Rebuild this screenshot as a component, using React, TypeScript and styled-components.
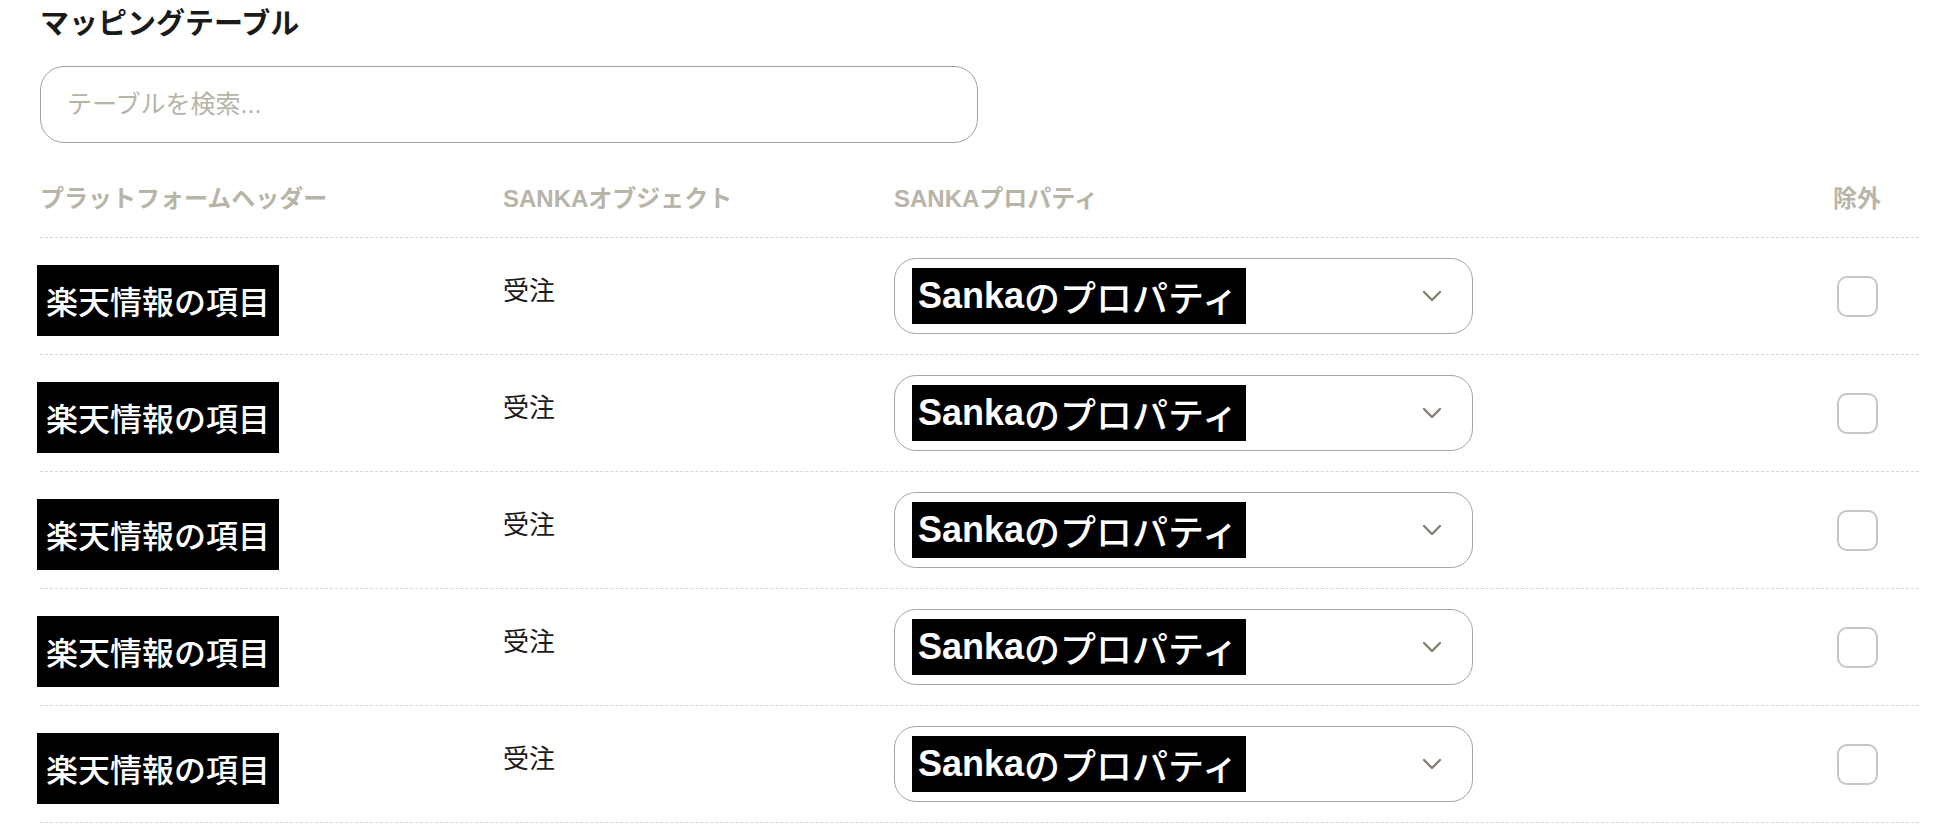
import React from "react"
import styled, { createGlobalStyle } from "styled-components"

const GlobalStyle = createGlobalStyle`
  html, body {
    margin: 0;
    padding: 0;
    background: #fff;
  }
  body {
    font-family: "Liberation Sans", "Noto Sans CJK JP", sans-serif;
    color: #1a1a1a;
  }
`

const Page = styled.div`
  padding: 4px 27px 0 40px;
`

const Title = styled.h2`
  margin: 0;
  font-size: 29px;
  line-height: 40px;
  font-weight: 700;
  color: #1a1a1a;
`

const SearchInput = styled.input`
  display: block;
  box-sizing: border-box;
  margin-top: 22px;
  width: 938px;
  height: 77px;
  padding: 0 26px;
  border: 1.5px solid #a3a3a3;
  border-radius: 24px;
  font-family: "Liberation Sans", "Noto Sans CJK JP", sans-serif;
  font-size: 25px;
  color: #1a1a1a;
  outline: none;

  &::placeholder {
    color: #b8b3a7;
  }
`

const Grid = styled.div`
  display: grid;
  grid-template-columns: 463px 391px 1fr 124px;
  align-items: center;
  border-bottom: 1px dashed #d6d6d6;
`

const HeaderRow = styled(Grid)`
  margin-top: 38px;
  padding-bottom: 20px;
`

const HeaderCell = styled.div<{ $center?: boolean }>`
  font-size: 24px;
  line-height: 36px;
  font-weight: 700;
  color: #b9b4a8;
  justify-self: ${(p) => (p.$center ? "center" : "start")};
`

const Row = styled(Grid)`
  padding: 20px 0;
`

const LabelImage = styled.span`
  display: inline-flex;
  align-items: center;
  justify-self: start;
  box-sizing: border-box;
  height: 71px;
  margin: 4px 0 -4px -3px;
  padding: 0 9px;
  background: #000;
  color: #fff;
  font-family: "Noto Sans CJK JP", sans-serif;
  font-size: 32px;
  font-weight: 500;
`

const ObjectText = styled.div`
  align-self: start;
  padding-top: 13px;
  font-family: "Noto Sans CJK JP", sans-serif;
  font-size: 26px;
  line-height: 36px;
  color: #1a1a1a;
`

const Select = styled.div`
  display: flex;
  align-items: center;
  justify-content: space-between;
  box-sizing: border-box;
  width: 579px;
  height: 76px;
  padding: 0 30px 0 17px;
  border: 1.5px solid #a6a6a6;
  border-radius: 22px;
  background: #fff;
`

const SelectValue = styled.span`
  display: inline-flex;
  align-items: center;
  height: 56px;
  padding: 0 8px 0 6px;
  background: #000;
  color: #fff;
  font-family: "Liberation Sans", "Noto Sans CJK JP", sans-serif;
  font-size: 36px;
  font-weight: 500;

  b {
    font-weight: 700;
  }
`

const Checkbox = styled.span`
  justify-self: center;
  box-sizing: border-box;
  width: 41px;
  height: 41px;
  border: 2px solid #c6c6c6;
  border-radius: 10px;
  background: #fff;
`

const Chevron = () => (
  <svg width="20" height="12" viewBox="0 0 20 12" fill="none">
    <polyline points="2,2 10,10 18,2" stroke="#858072" strokeWidth="2.4" strokeLinecap="round" strokeLinejoin="round" />
  </svg>
)

const rows = [1, 2, 3, 4, 5]

export default function App() {
  return (
    <Page>
      <GlobalStyle />
      <Title>マッピングテーブル</Title>
      <SearchInput placeholder="テーブルを検索..." />

      <HeaderRow>
        <HeaderCell>プラットフォームヘッダー</HeaderCell>
        <HeaderCell>SANKAオブジェクト</HeaderCell>
        <HeaderCell>SANKAプロパティ</HeaderCell>
        <HeaderCell $center>除外</HeaderCell>
      </HeaderRow>

      {rows.map((r) => (
        <Row key={r}>
          <LabelImage>楽天情報の項目</LabelImage>
          <ObjectText>受注</ObjectText>
          <Select>
            <SelectValue>
              <b>Sanka</b>のプロパティ
            </SelectValue>
            <Chevron />
          </Select>
          <Checkbox />
        </Row>
      ))}
    </Page>
  )
}
